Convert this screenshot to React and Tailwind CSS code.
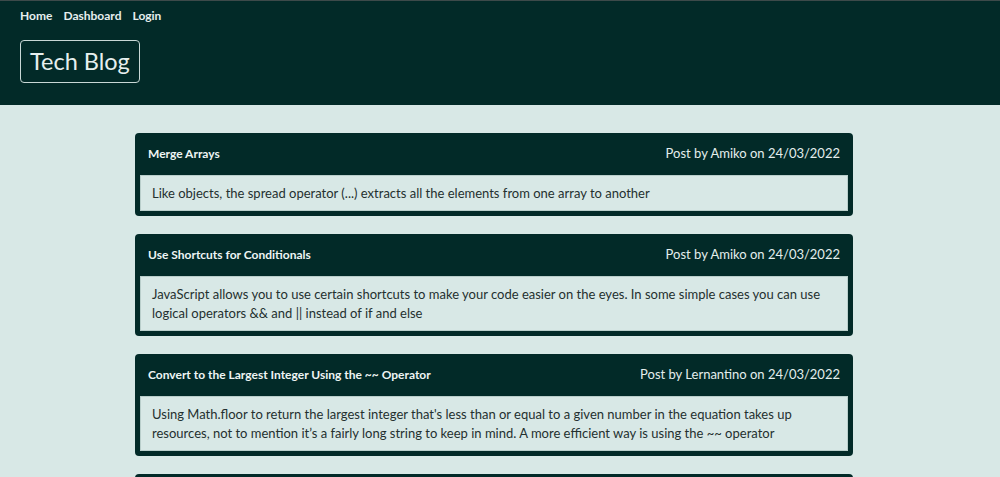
import React from 'react';

const posts = [
  {
    title: 'Merge Arrays',
    author: 'Amiko',
    date: '24/03/2022',
    body: 'Like objects, the spread operator (...) extracts all the elements from one array to another',
  },
  {
    title: 'Use Shortcuts for Conditionals',
    author: 'Amiko',
    date: '24/03/2022',
    body: 'JavaScript allows you to use certain shortcuts to make your code easier on the eyes. In some simple cases you can use logical operators && and || instead of if and else',
  },
  {
    title: 'Convert to the Largest Integer Using the ~~ Operator',
    author: 'Lernantino',
    date: '24/03/2022',
    body: "Using Math.floor to return the largest integer that's less than or equal to a given number in the equation takes up resources, not to mention it\u2019s a fairly long string to keep in mind. A more efficient way is using the ~~ operator",
  },
  {
    title: 'Remove Duplicates',
    author: 'Lernantino',
    date: '24/03/2022',
    body: 'Use a Set to quickly remove duplicate values from an array.',
  },
];

const PostCard = ({ post }) => (
  <div className="bg-[#022a28] rounded-[4px] px-[5px] pb-[5px]">
    <div className="flex items-center justify-between h-[42px] px-[8px]">
      <h2 className="text-[12px] font-bold text-[#eef5f4]">{post.title}</h2>
      <p className="text-[13px] text-[#e4eeed]">
        Post by {post.author} on {post.date}
      </p>
    </div>
    <div className="bg-[#d8e8e6] border border-[#b9cecb] px-[11px] pt-[8px] pb-[7px] text-[13px] leading-[19px] text-[#24302f]">
      {post.body}
    </div>
  </div>
);

const App = () => {
  return (
    <div
      className="h-screen overflow-y-scroll bg-[#d8e8e6]"
      style={{ fontFamily: '"Segoe UI", Lato, sans-serif' }}
    >
      <header className="bg-[#022a28] border-t border-[#3d4a4a] h-[105px] px-[20px]">
        <nav className="flex gap-[11px] pt-[6px] text-[12px] font-bold text-[#e6efee]">
          <a href="#">Home</a>
          <a href="#">Dashboard</a>
          <a href="#">Login</a>
        </nav>
        <div className="mt-[15px] inline-block border border-[#c9d8d6] rounded-[4px] px-[9px] py-[5px] text-[23.5px] leading-[31px] text-[#e6efee]">
          Tech Blog
        </div>
      </header>
      <main className="flex flex-col gap-[18px] w-[718px] ml-[135px] pt-[28px] pb-[40px]">
        {posts.map((post, i) => (
          <PostCard key={i} post={post} />
        ))}
      </main>
    </div>
  );
};

export default App;
